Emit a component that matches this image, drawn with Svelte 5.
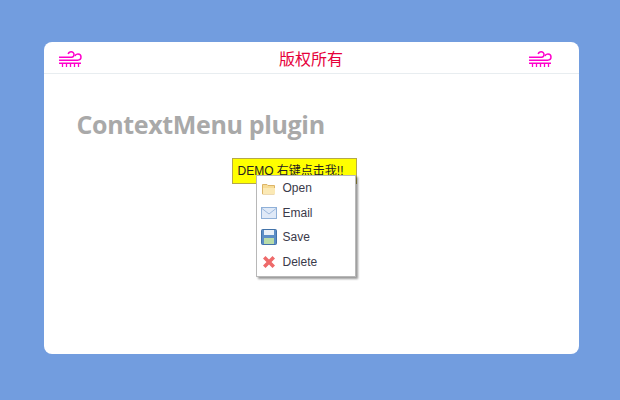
<script>
  const items = ['Open', 'Email', 'Save', 'Delete'];
</script>

{#snippet wind()}
  <svg class="wind" viewBox="0 0 24 20" width="24" height="20" fill="none" stroke="#f0c" stroke-width="1.5">
    <path d="M1 8.2H13.5C15.4 8.2 16 6.6 16 5.6C16 3.9 14.7 2.8 13.2 2.8C11.6 2.8 10.6 3.6 10.2 5" />
    <path d="M1 11.2H19.5C21.6 11.2 23 9.9 23 8.1C23 6.3 21.6 5 19.9 5C18.4 5 17.4 5.8 17 7" />
    <path d="M1 14.2H23" />
    <path d="M4.5 14.5V18M8.5 14.5V18M12.5 14.5V18M16.5 14.5V18M20.5 14.5V18" stroke-width="1.3" />
  </svg>
{/snippet}

<div class="card">
  <header>
    {@render wind()}
    <span class="rights">版权所有</span>
    {@render wind()}
  </header>
  <main>
    <h1>ContextMenu plugin</h1>
    <div class="demo-wrap">
      <div class="demo">DEMO 右键点击我!!</div>
      <ul class="menu">
        {#each items as item}
          <li>
            <svg class="ico" viewBox="0 0 16 16" width="16" height="16">
              {#if item === 'Open'}
                <path d="M1.5 4.5H6L7 5.5H13.5V14H1.5Z" fill="#f7dc96" stroke="#dcb467" />
                <path d="M2 8H14V14H2Z" fill="#fbe9b5" />
              {:else if item === 'Email'}
                <rect x="0.5" y="2.5" width="15" height="11" fill="#dfe9f7" stroke="#8fb0d8" />
                <path d="M1 3.5L8 9L15 3.5" fill="none" stroke="#9dbadf" />
              {:else if item === 'Save'}
                <rect x="0.5" y="0.5" width="15" height="15" rx="1" fill="#5b8ec6" stroke="#4272a8" />
                <rect x="3" y="1" width="10" height="5" fill="#e8f0f8" />
                <rect x="3" y="9" width="10" height="6" fill="#b9dca8" />
              {:else}
                <path d="M2 4.5L4.5 2L8 5.5L11.5 2L14 4.5L10.5 8L14 11.5L11.5 14L8 10.5L4.5 14L2 11.5L5.5 8Z" fill="#ee6a6a" />
              {/if}
            </svg>
            <span>{item}</span>
          </li>
        {/each}
      </ul>
    </div>
  </main>
</div>

<style>
  :global(body) {
    margin: 0;
    background: #729ddf;
  }
  .card {
    box-sizing: border-box;
    width: 535px;
    height: 312px;
    margin: 42px 0 0 43.5px;
    background: #fff;
    border-radius: 8px;
    overflow: hidden;
    position: relative;
    top: 0;
  }
  :global(#app) {
    display: flow-root;
    height: 400px;
    overflow: hidden;
  }
  header {
    box-sizing: border-box;
    height: 32px;
    display: flex;
    align-items: center;
    justify-content: space-between;
    padding: 0 485px 0 14px;
    padding-right: 14px;
    border-bottom: 1px solid #e8edf0;
  }
  .wind {
    display: block;
    margin-top: 2px;
    margin-right: 12px;
  }
  .rights {
    font: 16px/20px "Noto Sans CJK SC", sans-serif;
    color: #e6003a;
  }
  main {
    padding: 33px 0 0 33px;
  }
  h1 {
    margin: 0;
    font: 700 25px/34px "Open Sans", sans-serif;
    color: #a9a9a9;
    letter-spacing: -0.35px;
  }
  .demo-wrap {
    position: relative;
    margin: 17px 0 0 155px;
    width: fit-content;
  }
  .demo {
    box-sizing: border-box;
    height: 26px;
    padding: 0 5px;
    width: 125px;
    background: #ff0;
    border: 1px solid #b5a84a;
    font: 12px/24px "Liberation Sans", "Noto Sans CJK SC", sans-serif;
    color: #222;
    white-space: nowrap;
  }
  .menu {
    position: absolute;
    left: 24px;
    top: 17px;
    box-sizing: border-box;
    width: 100px;
    height: 102px;
    margin: 0;
    padding: 0;
    list-style: none;
    background: #fff;
    border: 1px solid #b8b8b8;
    box-shadow: 2px 2px 2px rgba(0, 0, 0, 0.4);
  }
  li {
    display: flex;
    align-items: center;
    height: 24.5px;
    padding-left: 4px;
    gap: 6px;
    font: 12px/16px "Liberation Sans", sans-serif;
    color: #3a3a4a;
  }
  .ico {
    display: block;
    flex: none;
  }
</style>
